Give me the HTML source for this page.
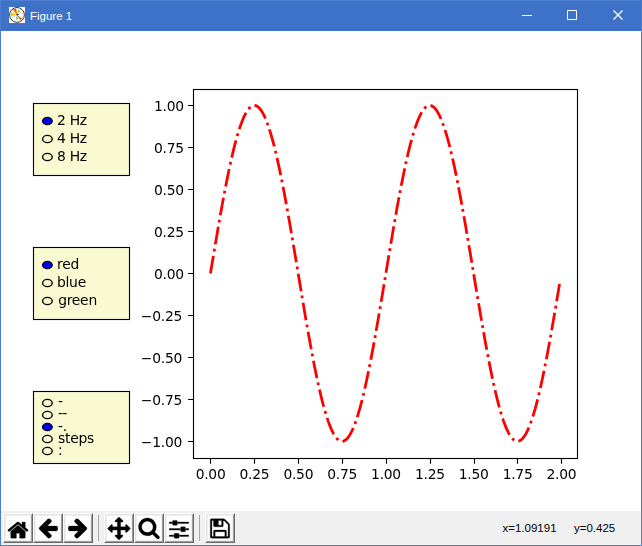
<!DOCTYPE html>
<html><head><meta charset="utf-8"><title>Figure 1</title>
<style>
html,body{margin:0;padding:0;background:#fff;}
body{width:642px;height:546px;overflow:hidden;position:relative;font-family:"Liberation Sans",sans-serif;}
.win{position:absolute;left:0;top:0;width:642px;height:546px;background:#4c7dce;}
.title{position:absolute;left:0;top:0;width:642px;height:31px;background:#3d72c8;box-sizing:border-box;border:1px solid #4c7dce;border-bottom:0;}
.title .cap{position:absolute;left:29px;top:8px;font-size:11.5px;line-height:14px;color:#fff;white-space:nowrap;}
.title svg.ico{position:absolute;left:8px;top:6px;}
.ctl{position:absolute;top:-1px;left:-1px;}
.fig{position:absolute;left:1px;top:31px;display:block;will-change:transform;}
.t{font-family:"DejaVu Sans","Liberation Sans",sans-serif;font-size:13.889px;fill:#000;letter-spacing:-0.27px;}
.tool{position:absolute;left:1px;top:511px;width:640px;height:34px;background:#f0f0f0;box-sizing:border-box;border-left:1px solid #f5f3eb;border-right:1px solid #f5f3eb;border-bottom:1px solid #f5f3eb;}
.btn{position:absolute;top:2px;width:30px;height:30px;box-sizing:border-box;background:#f0f0f0;border:1px solid;border-color:#fff #696969 #696969 #fff;margin-left:-1px}
.btn:before{content:"";position:absolute;left:0;top:0;right:0;bottom:0;border:1px solid;border-color:#e3e3e3 #a0a0a0 #a0a0a0 #e3e3e3;}
.btn svg{position:absolute;left:2px;top:2px;background:#fff;}
.sep{position:absolute;top:4px;width:1px;height:26px;background:#a9a9a9;margin-left:-1px}
.msg{position:absolute;top:521px;font-size:11.5px;line-height:14px;color:#000;white-space:pre;}
</style></head><body>
<div class="win">
<div class="title">
<svg class="ico" width="16" height="16" viewBox="0 0 16 16"><rect width="16" height="16" fill="#fff"/><circle cx="8" cy="7.9" r="7.4" fill="none" stroke="#111" stroke-width="0.85"/><path d="M8.2 8.1L3.6 2.4L7.1 1.4Z" fill="#ff5a00"/><path d="M8.2 7.7L1.8 5.1L1.9 9.2Z" fill="#ffc400"/><path d="M8 8L11.2 13.1L13.4 11.8Z" fill="#e05a0a"/><path d="M8 7.2L6.7 12.7L9.2 12.5Z" fill="#5fdc5f"/><path d="M8.2 7.6L9 2.7L11.5 3.7Z" fill="#9fd41f"/><circle cx="8.3" cy="7.7" r="0.9" fill="#333"/><circle cx="9.6" cy="7.5" r="0.5" fill="#2a50b0"/><circle cx="5.5" cy="9.4" r="0.45" fill="#2aa198"/></svg>
<div class="cap">Figure 1</div>
<svg class="ctl" width="642" height="31" viewBox="0 0 642 31"><path d="M522 15.5h10M567.5 10.5h9v9h-9z" stroke="#fff" stroke-width="1" fill="none"/><path d="M613.5 10.5l9 9M622.5 10.5l-9 9" stroke="#fff" stroke-width="1.25" fill="none"/></svg>
</div>
<svg class="fig" width="640" height="480" viewBox="0 0 640 480">
<rect width="640" height="480" fill="#fff"/>
<rect x="32.5" y="72.5" width="96" height="72" fill="#fafad2"/>
<ellipse cx="46.40" cy="90.00" rx="4.80" ry="3.60" fill="#0000ff" stroke="#000" stroke-width="1.389"/>
<text x="56.00" y="93.83" class="t">2 Hz</text>
<ellipse cx="46.40" cy="108.00" rx="4.80" ry="3.60" fill="#fafad2" stroke="#000" stroke-width="1.389"/>
<text x="56.00" y="111.83" class="t">4 Hz</text>
<ellipse cx="46.40" cy="126.00" rx="4.80" ry="3.60" fill="#fafad2" stroke="#000" stroke-width="1.389"/>
<text x="56.00" y="129.83" class="t">8 Hz</text>
<rect x="32.5" y="72.5" width="96" height="72" fill="none" stroke="#000" stroke-width="1.111"/>
<rect x="32.5" y="216.5" width="96" height="72" fill="#fafad2"/>
<ellipse cx="46.40" cy="234.00" rx="4.80" ry="3.60" fill="#0000ff" stroke="#000" stroke-width="1.389"/>
<text x="56.00" y="237.83" class="t">red</text>
<ellipse cx="46.40" cy="252.00" rx="4.80" ry="3.60" fill="#fafad2" stroke="#000" stroke-width="1.389"/>
<text x="56.00" y="255.83" class="t">blue</text>
<ellipse cx="46.40" cy="270.00" rx="4.80" ry="3.60" fill="#fafad2" stroke="#000" stroke-width="1.389"/>
<text x="57.20" y="273.83" class="t">green</text>
<rect x="32.5" y="216.5" width="96" height="72" fill="none" stroke="#000" stroke-width="1.111"/>
<rect x="32.5" y="360.5" width="96" height="72" fill="#fafad2"/>
<ellipse cx="46.40" cy="372.00" rx="4.80" ry="3.60" fill="#fafad2" stroke="#000" stroke-width="1.389"/>
<text x="57.10" y="374.93" class="t">-</text>
<ellipse cx="46.40" cy="384.00" rx="4.80" ry="3.60" fill="#fafad2" stroke="#000" stroke-width="1.389"/>
<text x="57.10" y="386.83" class="t" style="letter-spacing:-0.85px">--</text>
<ellipse cx="46.40" cy="396.00" rx="4.80" ry="3.60" fill="#0000ff" stroke="#000" stroke-width="1.389"/>
<text x="57.10" y="399.83" class="t">-.</text>
<ellipse cx="46.40" cy="408.00" rx="4.80" ry="3.60" fill="#fafad2" stroke="#000" stroke-width="1.389"/>
<text x="57.10" y="411.83" class="t">steps</text>
<ellipse cx="46.40" cy="420.00" rx="4.80" ry="3.60" fill="#fafad2" stroke="#000" stroke-width="1.389"/>
<text x="56.90" y="424.33" class="t">:</text>
<rect x="32.5" y="360.5" width="96" height="72" fill="none" stroke="#000" stroke-width="1.111"/>
<polyline points="209.45,242.40 211.21,231.85 212.96,221.34 214.72,210.92 216.47,200.62 218.23,190.49 219.98,180.56 221.73,170.87 223.49,161.47 225.24,152.38 227.00,143.65 228.75,135.31 230.51,127.40 232.26,119.93 234.01,112.95 235.77,106.49 237.52,100.55 239.28,95.18 241.03,90.39 242.78,86.20 244.54,82.62 246.29,79.68 248.05,77.38 249.80,75.72 251.56,74.73 253.31,74.40 255.06,74.73 256.82,75.72 258.57,77.38 260.33,79.68 262.08,82.62 263.84,86.20 265.59,90.39 267.34,95.18 269.10,100.55 270.85,106.49 272.61,112.95 274.36,119.93 276.12,127.40 277.87,135.31 279.62,143.65 281.38,152.38 283.13,161.47 284.89,170.87 286.64,180.56 288.39,190.49 290.15,200.62 291.90,210.92 293.66,221.34 295.41,231.85 297.17,242.40 298.92,252.95 300.67,263.46 302.43,273.88 304.18,284.18 305.94,294.31 307.69,304.24 309.45,313.93 311.20,323.33 312.95,332.42 314.71,341.15 316.46,349.49 318.22,357.40 319.97,364.87 321.72,371.85 323.48,378.31 325.23,384.25 326.99,389.62 328.74,394.41 330.50,398.60 332.25,402.18 334.00,405.12 335.76,407.42 337.51,409.08 339.27,410.07 341.02,410.40 342.78,410.07 344.53,409.08 346.28,407.42 348.04,405.12 349.79,402.18 351.55,398.60 353.30,394.41 355.06,389.62 356.81,384.25 358.56,378.31 360.32,371.85 362.07,364.87 363.83,357.40 365.58,349.49 367.33,341.15 369.09,332.42 370.84,323.33 372.60,313.93 374.35,304.24 376.11,294.31 377.86,284.18 379.61,273.88 381.37,263.46 383.12,252.95 384.88,242.40 386.63,231.85 388.39,221.34 390.14,210.92 391.89,200.62 393.65,190.49 395.40,180.56 397.16,170.87 398.91,161.47 400.67,152.38 402.42,143.65 404.17,135.31 405.93,127.40 407.68,119.93 409.44,112.95 411.19,106.49 412.94,100.55 414.70,95.18 416.45,90.39 418.21,86.20 419.96,82.62 421.72,79.68 423.47,77.38 425.22,75.72 426.98,74.73 428.73,74.40 430.49,74.73 432.24,75.72 434.00,77.38 435.75,79.68 437.50,82.62 439.26,86.20 441.01,90.39 442.77,95.18 444.52,100.55 446.28,106.49 448.03,112.95 449.78,119.93 451.54,127.40 453.29,135.31 455.05,143.65 456.80,152.38 458.55,161.47 460.31,170.87 462.06,180.56 463.82,190.49 465.57,200.62 467.33,210.92 469.08,221.34 470.83,231.85 472.59,242.40 474.34,252.95 476.10,263.46 477.85,273.88 479.61,284.18 481.36,294.31 483.11,304.24 484.87,313.93 486.62,323.33 488.38,332.42 490.13,341.15 491.88,349.49 493.64,357.40 495.39,364.87 497.15,371.85 498.90,378.31 500.66,384.25 502.41,389.62 504.16,394.41 505.92,398.60 507.67,402.18 509.43,405.12 511.18,407.42 512.94,409.08 514.69,410.07 516.44,410.40 518.20,410.07 519.95,409.08 521.71,407.42 523.46,405.12 525.22,402.18 526.97,398.60 528.72,394.41 530.48,389.62 532.23,384.25 533.99,378.31 535.74,371.85 537.49,364.87 539.25,357.40 541.00,349.49 542.76,341.15 544.51,332.42 546.27,323.33 548.02,313.93 549.77,304.24 551.53,294.31 553.28,284.18 555.04,273.88 556.79,263.46 558.55,252.95" fill="none" stroke="#ff0000" stroke-width="2.778" stroke-dasharray="17.78,4.44,2.78,4.44" stroke-linejoin="round"/>
<text x="209.58" y="448.48" class="t" text-anchor="middle">0.00</text>
<text x="253.44" y="448.48" class="t" text-anchor="middle">0.25</text>
<text x="297.30" y="448.48" class="t" text-anchor="middle">0.50</text>
<text x="341.15" y="448.48" class="t" text-anchor="middle">0.75</text>
<text x="385.01" y="448.48" class="t" text-anchor="middle">1.00</text>
<text x="428.86" y="448.48" class="t" text-anchor="middle">1.25</text>
<text x="472.72" y="448.48" class="t" text-anchor="middle">1.50</text>
<text x="516.57" y="448.48" class="t" text-anchor="middle">1.75</text>
<text x="560.43" y="448.48" class="t" text-anchor="middle">2.00</text>
<text x="181.03" y="415.68" class="t" text-anchor="end">−1.00</text>
<text x="181.03" y="373.68" class="t" text-anchor="end">−0.75</text>
<text x="181.03" y="331.68" class="t" text-anchor="end">−0.50</text>
<text x="181.03" y="289.68" class="t" text-anchor="end">−0.25</text>
<text x="182.83" y="247.68" class="t" text-anchor="end">0.00</text>
<text x="182.83" y="205.68" class="t" text-anchor="end">0.25</text>
<text x="182.83" y="163.68" class="t" text-anchor="end">0.50</text>
<text x="182.83" y="121.68" class="t" text-anchor="end">0.75</text>
<text x="182.83" y="79.68" class="t" text-anchor="end">1.00</text>
<path d="M209.5 427.5v5.36M253.5 427.5v5.36M297.5 427.5v5.36M341.5 427.5v5.36M385.5 427.5v5.36M429.5 427.5v5.36M473.5 427.5v5.36M516.5 427.5v5.36M560.5 427.5v5.36M192.5 410.5h-5.36M192.5 368.5h-5.36M192.5 326.5h-5.36M192.5 284.5h-5.36M192.5 242.5h-5.36M192.5 200.5h-5.36M192.5 158.5h-5.36M192.5 116.5h-5.36M192.5 74.5h-5.36" stroke="#000" stroke-width="1.111" fill="none"/>
<rect x="192.5" y="58.5" width="384.0" height="369.0" fill="none" stroke="#000" stroke-width="1.111"/>
</svg>
<div class="tool">
<div class="btn" style="left:2px"><svg width="24" height="24" viewBox="0 0 72 72"><path d="M 57.86 45.94 C 57.86 45.87 57.86 45.79 57.82 45.72 L 35.99 27.73 L 14.18 45.72 C 14.18 45.79 14.14 45.87 14.14 45.94 L 14.14 64.15 C 14.14 65.48 15.24 66.58 16.57 66.58 L 31.14 66.58 L 31.14 52.02 L 40.86 52.02 L 40.86 66.58 L 55.43 66.58 C 56.76 66.58 57.86 65.48 57.86 64.15 z M 66.32 43.33 C 66.73 42.83 66.66 42.03 66.17 41.62 L 57.86 34.71 L 57.86 19.23 C 57.86 18.55 57.33 18.02 56.64 18.02 L 49.36 18.02 C 48.67 18.02 48.14 18.55 48.14 19.23 L 48.14 26.62 L 38.88 18.89 C 37.29 17.56 34.71 17.56 33.12 18.89 L 5.83 41.62 C 5.34 42.03 5.27 42.83 5.68 43.33 L 8.03 46.13 C 8.22 46.35 8.53 46.51 8.83 46.55 C 9.17 46.59 9.47 46.47 9.74 46.28 L 35.99 24.39 L 62.26 46.28 C 62.48 46.47 62.75 46.55 63.06 46.55 C 63.09 46.55 63.13 46.55 63.17 46.55 C 63.47 46.51 63.78 46.35 63.97 46.13 z" style="fill:black;;stroke:#000;stroke-width:0.9;stroke-linejoin:round"/></svg></div>
<div class="btn" style="left:32px"><svg width="24" height="24" viewBox="0 0 72 72"><path d="M 65.14 35.01 C 65.14 32.42 63.43 30.15 60.7 30.15 L 33.99 30.15 L 45.11 19.04 C 46.02 18.12 46.55 16.87 46.55 15.58 C 46.55 14.29 46.02 13.03 45.11 12.13 L 42.26 9.32 C 41.34 8.41 40.13 7.88 38.85 7.88 C 37.55 7.88 36.3 8.41 35.39 9.32 L 10.69 33.99 C 9.82 34.9 9.29 36.14 9.29 37.44 C 9.29 38.73 9.82 39.98 10.69 40.85 L 35.39 65.6 C 36.3 66.47 37.55 67 38.85 67 C 40.13 67 41.39 66.47 42.26 65.6 L 45.11 62.71 C 46.02 61.84 46.55 60.58 46.55 59.3 C 46.55 58.01 46.02 56.76 45.11 55.88 L 33.99 44.73 L 60.7 44.73 C 63.43 44.73 65.14 42.44 65.14 39.86 z" style="fill:black;;stroke:#000;stroke-width:0.9;stroke-linejoin:round"/></svg></div>
<div class="btn" style="left:62px"><svg width="24" height="24" viewBox="0 0 72 72"><path d="M 62.71 37.44 C 62.71 36.14 62.22 34.9 61.31 34.02 L 36.61 9.32 C 35.69 8.41 34.44 7.88 33.15 7.88 C 31.87 7.88 30.64 8.41 29.74 9.32 L 26.89 12.16 C 25.98 13.03 25.45 14.29 25.45 15.58 C 25.45 16.87 25.98 18.12 26.89 19 L 38.01 30.15 L 11.3 30.15 C 8.57 30.15 6.86 32.42 6.86 35.01 L 6.86 39.86 C 6.86 42.44 8.57 44.73 11.3 44.73 L 38.01 44.73 L 26.89 55.84 C 25.98 56.76 25.45 58.01 25.45 59.3 C 25.45 60.58 25.98 61.84 26.89 62.75 L 29.74 65.6 C 30.64 66.47 31.87 67 33.15 67 C 34.44 67 35.69 66.47 36.61 65.6 L 61.31 40.89 C 62.22 39.98 62.71 38.73 62.71 37.44" style="fill:black;;stroke:#000;stroke-width:0.9;stroke-linejoin:round"/></svg></div>
<div class="btn" style="left:103px"><svg width="24" height="24" viewBox="0 0 72 72"><path d="M 70 37.44 C 70 36.8 69.73 36.19 69.28 35.74 L 59.57 26.02 C 59.11 25.56 58.5 25.3 57.86 25.3 C 56.53 25.3 55.43 26.4 55.43 27.73 L 55.43 32.58 L 40.86 32.58 L 40.86 18.02 L 45.71 18.02 C 47.04 18.02 48.14 16.91 48.14 15.58 C 48.14 14.94 47.88 14.33 47.42 13.87 L 37.71 4.16 C 37.25 3.71 36.65 3.44 36 3.44 C 35.35 3.44 34.75 3.71 34.29 4.16 L 24.58 13.87 C 24.12 14.33 23.86 14.94 23.86 15.58 C 23.86 16.91 24.96 18.02 26.29 18.02 L 31.14 18.02 L 31.14 32.58 L 16.57 32.58 L 16.57 27.73 C 16.57 26.4 15.47 25.3 14.14 25.3 C 13.5 25.3 12.89 25.56 12.43 26.02 L 2.72 35.74 C 2.27 36.19 2 36.8 2 37.44 C 2 38.09 2.27 38.69 2.72 39.15 L 12.43 48.86 C 12.89 49.32 13.5 49.58 14.14 49.58 C 15.47 49.58 16.57 48.49 16.57 47.16 L 16.57 42.3 L 31.14 42.3 L 31.14 56.87 L 26.29 56.87 C 24.96 56.87 23.86 57.97 23.86 59.3 C 23.86 59.94 24.12 60.55 24.58 61.01 L 34.29 70.72 C 34.75 71.17 35.35 71.44 36 71.44 C 36.65 71.44 37.25 71.17 37.71 70.72 L 47.42 61.01 C 47.88 60.55 48.14 59.94 48.14 59.3 C 48.14 57.97 47.04 56.87 45.71 56.87 L 40.86 56.87 L 40.86 42.3 L 55.43 42.3 L 55.43 47.16 C 55.43 48.49 56.53 49.58 57.86 49.58 C 58.5 49.58 59.11 49.32 59.57 48.86 L 69.28 39.15 C 69.73 38.69 70 38.09 70 37.44" style="fill:black;;stroke:#000;stroke-width:0.9;stroke-linejoin:round"/></svg></div>
<div class="btn" style="left:133px"><svg width="24" height="24" viewBox="0 0 72 72"><path d="M 48.14 32.59 C 48.14 41.96 40.51 49.59 31.14 49.59 C 21.77 49.59 14.14 41.96 14.14 32.59 C 14.14 23.22 21.77 15.59 31.14 15.59 C 40.51 15.59 48.14 23.22 48.14 32.59 M 67.57 64.16 C 67.57 62.87 67.04 61.62 66.17 60.75 L 53.15 47.73 C 56.22 43.29 57.86 37.98 57.86 32.59 C 57.86 17.82 45.91 5.87 31.14 5.87 C 16.38 5.87 4.43 17.82 4.43 32.59 C 4.43 47.35 16.38 59.3 31.14 59.3 C 36.53 59.3 41.84 57.66 46.28 54.59 L 59.3 67.58 C 60.17 68.48 61.42 69.01 62.72 69.01 C 65.37 69.01 67.57 66.81 67.57 64.16" style="fill:black;;stroke:#000;stroke-width:0.9;stroke-linejoin:round"/></svg></div>
<div class="btn" style="left:163px"><svg width="24" height="24" viewBox="0 0 72 72"><path d="M 20.21 56.87 L 6.86 56.87 L 6.86 61.73 L 20.21 61.73 z M 33.57 52.02 L 23.86 52.02 C 22.53 52.02 21.42 53.11 21.42 54.44 L 21.42 64.16 C 21.42 65.49 22.53 66.58 23.86 66.58 L 33.57 66.58 C 34.9 66.58 36 65.49 36 64.16 L 36 54.44 C 36 53.11 34.9 52.02 33.57 52.02 M 39.64 37.44 L 6.86 37.44 L 6.86 42.3 L 39.64 42.3 z M 15.36 18.02 L 6.86 18.02 L 6.86 22.87 L 15.36 22.87 z M 65.14 56.87 L 37.21 56.87 L 37.21 61.73 L 65.14 61.73 z M 28.71 13.16 L 19 13.16 C 17.67 13.16 16.57 14.26 16.57 15.58 L 16.57 25.3 C 16.57 26.62 17.67 27.73 19 27.73 L 28.71 27.73 C 30.04 27.73 31.14 26.62 31.14 25.3 L 31.14 15.58 C 31.14 14.26 30.04 13.16 28.71 13.16 M 53 32.58 L 43.29 32.58 C 41.96 32.58 40.86 33.69 40.86 35.02 L 40.86 44.73 C 40.86 46.06 41.96 47.16 43.29 47.16 L 53 47.16 C 54.33 47.16 55.42 46.06 55.42 44.73 L 55.42 35.02 C 55.42 33.69 54.33 32.58 53 32.58 M 65.14 37.44 L 56.64 37.44 L 56.64 42.3 L 65.14 42.3 z M 65.14 18.02 L 32.36 18.02 L 32.36 22.87 L 65.14 22.87 z" style="fill:black;;stroke:#000;stroke-width:0.9;stroke-linejoin:round"/></svg></div>
<div class="btn" style="left:204px"><svg width="24" height="24" viewBox="0 0 72 72"><path d="M 21.42 61.73 L 21.42 47.16 L 50.57 47.16 L 50.57 61.73 z M 55.42 61.73 L 55.42 45.94 C 55.42 43.93 53.8 42.3 51.79 42.3 L 20.21 42.3 C 18.2 42.3 16.57 43.93 16.57 45.94 L 16.57 61.73 L 11.71 61.73 L 11.71 13.16 L 16.57 13.16 L 16.57 28.94 C 16.57 30.96 18.2 32.58 20.21 32.58 L 42.07 32.58 C 44.09 32.58 45.71 30.96 45.71 28.94 L 45.71 13.16 C 46.48 13.16 47.95 13.77 48.48 14.3 L 59.14 24.96 C 59.64 25.45 60.29 27.01 60.29 27.73 L 60.29 61.73 z M 40.86 26.52 C 40.86 27.16 40.28 27.73 39.64 27.73 L 32.36 27.73 C 31.71 27.73 31.14 27.16 31.14 26.52 L 31.14 14.37 C 31.14 13.72 31.71 13.16 32.36 13.16 L 39.64 13.16 C 40.28 13.16 40.86 13.72 40.86 14.37 z M 65.14 27.73 C 65.14 25.72 64.01 22.95 62.56 21.5 L 51.94 10.88 C 50.49 9.44 47.72 8.3 45.71 8.3 L 10.5 8.3 C 8.49 8.3 6.86 9.93 6.86 11.94 L 6.86 62.94 C 6.86 64.96 8.49 66.58 10.5 66.58 L 61.5 66.58 C 63.51 66.58 65.14 64.96 65.14 62.94 z" style="fill:black;;stroke:#000;stroke-width:0.9;stroke-linejoin:round"/></svg></div>
<div class="sep" style="left:97px"></div><div class="sep" style="left:198px"></div>
</div>
<div class="msg" style="left:502.5px">x=1.09191</div><div class="msg" style="left:574px">y=0.425</div>
</div>
</body></html>
